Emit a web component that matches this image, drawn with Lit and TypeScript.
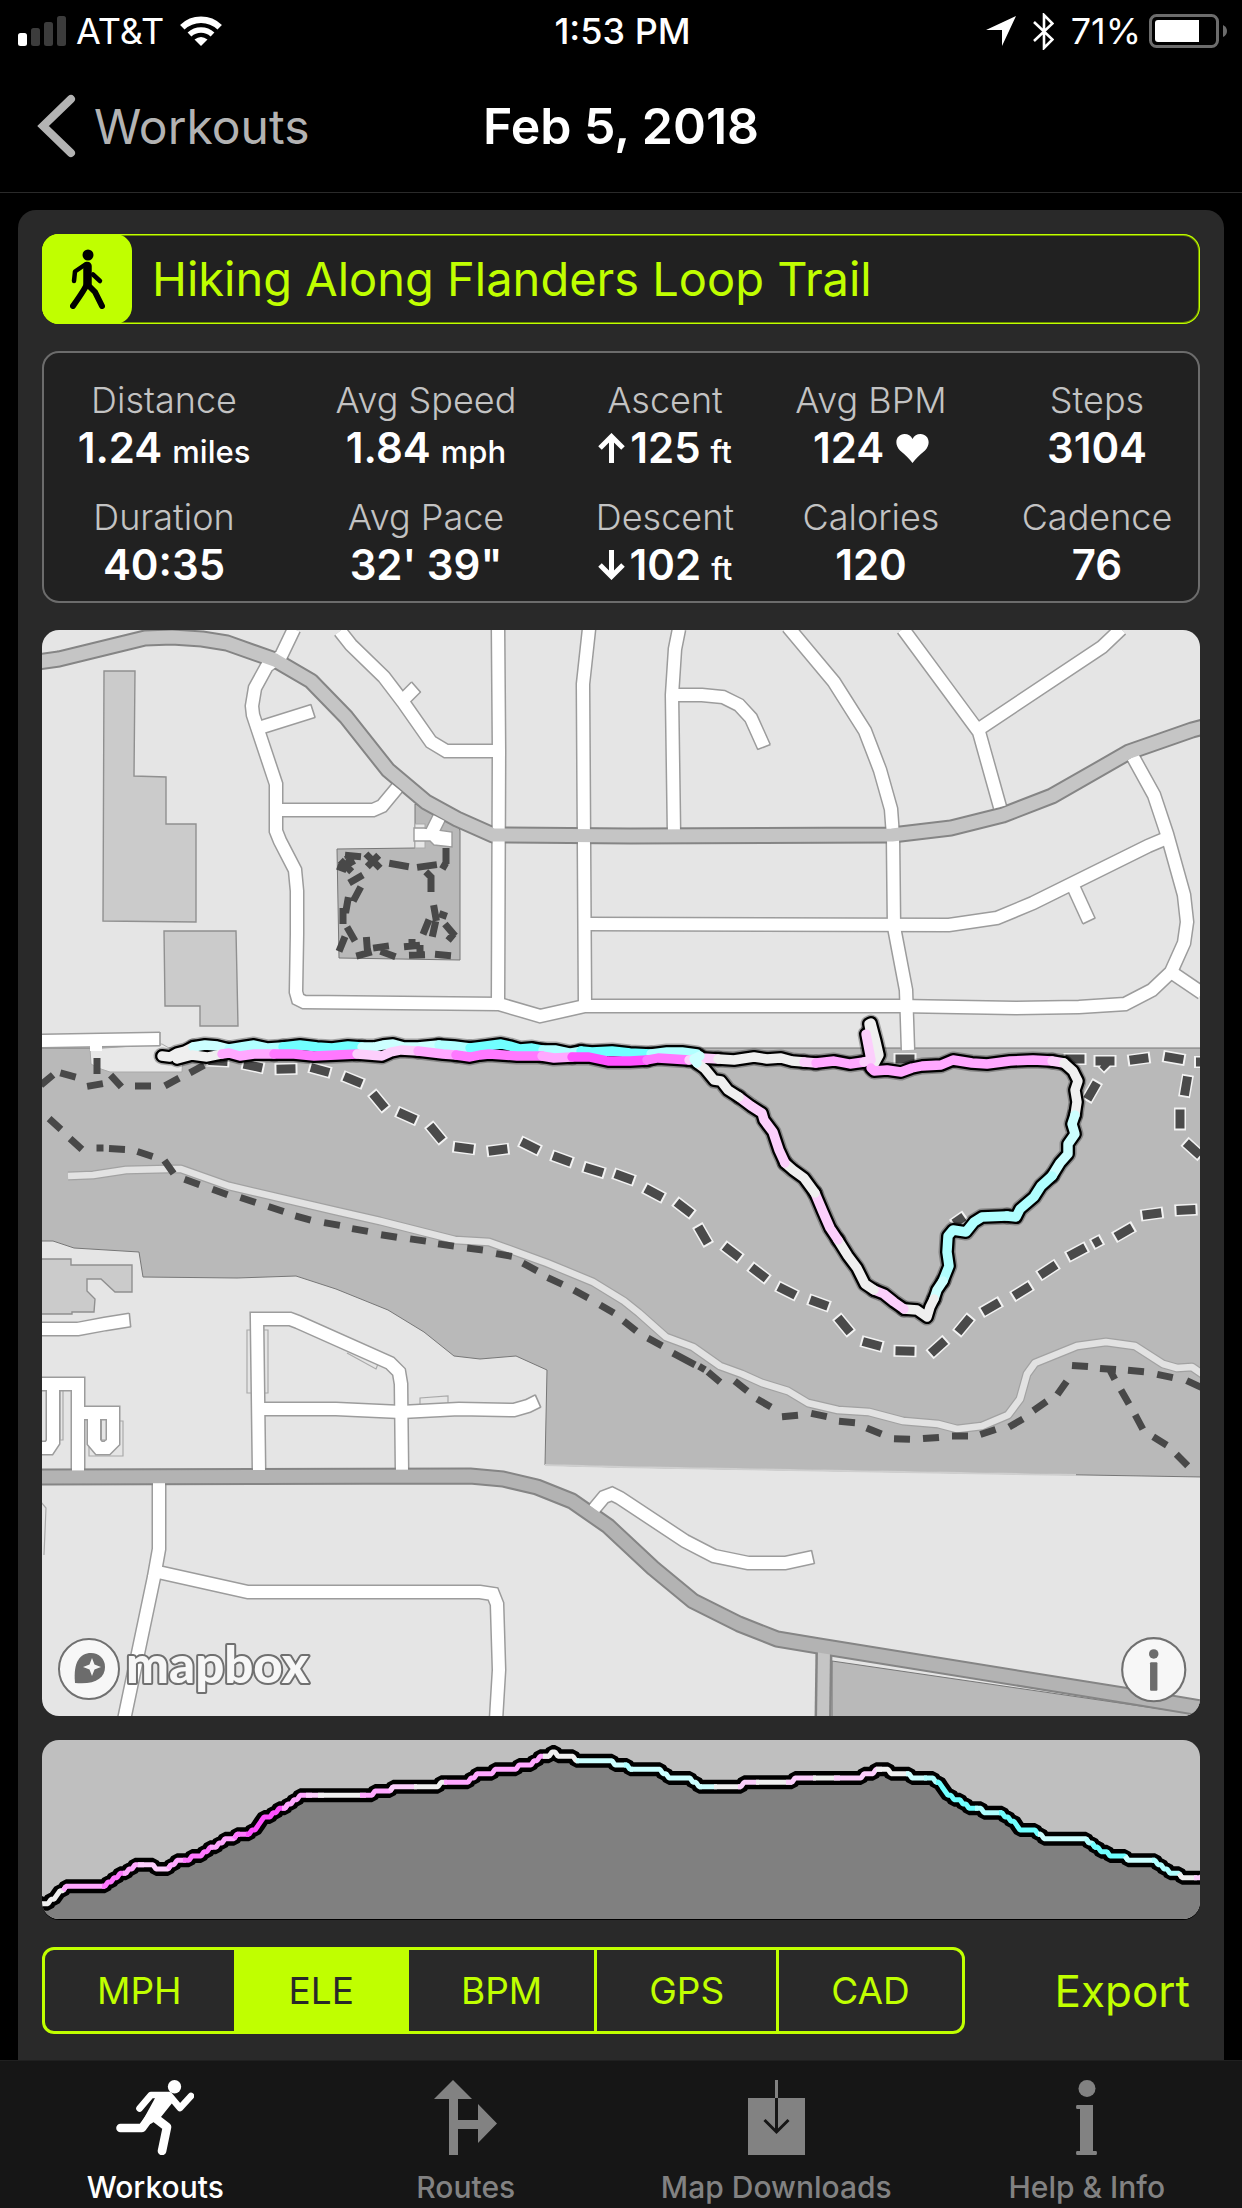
import { LitElement, html, svg, css } from "lit";
import { customElement, state } from "lit/decorators.js";
import { classMap } from "lit/directives/class-map.js";

type Point = [number, number];
/** Centre x, centre y, angle in degrees and an optional length. */
type Dash = [number, number, number, number?];

const TINTS: Record<string, string> = {
  w: "#efefef",
  p: "#fccffc",
  q: "#ffa8ff",
  m: "#ff78ff",
  M: "#ff50ff",
  c: "#ccffff",
  d: "#b0ffff",
  C: "#70ffff",
};

const MINOR_ROADS: string[] = [
  "252,-1 239,26 225,36 213,58 210,76 211,85 215,97 234,154 234,201 238,211 253,240 255,261 255,304 254,362 256,369 262,372 457,374 498,386 543,376 857,376 974,378 1037,377 1083,374 1110,360 1129,342 1142,313 1145,292 1142,265 1125,204 1112,165 1091,127",
  "220,97 271,81",
  "239,180 331,180 340,176 355,158",
  "298,1 309,15 342,47 361,72 389,112 404,121 457,121",
  "361,70 374,57",
  "456,-5 457,121 456,374",
  "547,-1 541,54 543,376",
  "543,294 907,295 955,288 991,273 1106,216 1125,208",
  "637,-1 633,19 630,65 632,204",
  "631,65 660,65 681,67 697,75 709,88 722,117",
  "746,-3 792,52 823,101 838,140 849,179 851,206 852,297 864,360 866,420",
  "861,-1 937,102 958,177",
  "937,99 1060,17 1079,-1",
  "1031,256 1047,291",
  "1129,342 1160,363",
  "397,188 388,206",
  "-5,411 118,409",
  "117,850 117,919 112,947 82,1090",
  "116,942 206,962 438,962 451,964 455,974 457,1040 454,1090",
  "217,842 215,689 248,689 256,692 348,733 357,742 359,754 360,842",
  "216,779 294,779 359,782 417,779 472,780 486,776 496,771",
  "-5,699 36,699 63,694 88,690",
  "-5,754 36,754 36,842",
  "11,758 11,812 7,818 -5,818",
  "36,783 71,783 71,812 65,818 57,818 52,812 52,783",
  "552,879 562,867 570,864 578,868 643,911 672,926 706,933 743,933 771,927",
];

const ROAD_ENDS: Dash[] = [
  [271, 81, 72], [374, 57, 49], [722, 117, 158], [1047, 291, 155],
  [118, 409, 90], [496, 771, 66], [88, 690, 84], [771, 927, 78],
];

const NORTH_ROAD =
  "-5,32 17,29 103,8 130,7 160,9 185,13 233,30 269,51 304,87 346,140 384,172 415,189 451,205 588,206 850,205 909,198 961,185 1010,166 1087,122 1150,100 1165,96";
const SOUTH_ROAD =
  "-5,847 428,846 461,849 495,857 530,871 566,896 611,938 651,971 697,994 735,1009 777,1016 1087,1066 1165,1079";
const CREEK =
  "26,546 51,545 84,540 126,539 139,539 187,556 294,581 338,591 413,610 447,612 505,633 551,652 582,671 597,683 624,707 651,717 678,736 700,744 720,753 746,761 766,773 796,780 827,782 861,791 896,794 915,799 940,796 966,785 978,769 985,744 993,733 1035,716 1064,712 1093,716 1121,734 1135,738 1150,737 1163,746";

const TRAIL_DASHES: Dash[] = [
  [176, 431, 3], [211, 436, 12], [244, 439, -1], [278, 440, 15], [311, 450, 22],
  [337, 471, 50], [365, 486, 24], [394, 503, 50], [422, 518, 7], [456, 520, -7],
  [488, 516, 26], [520, 529, 20], [552, 540, 17], [582, 547, 20], [612, 563, 28],
  [642, 578, 38], [661, 605, 60], [690, 622, 38], [717, 643, 38], [745, 661, 27],
  [777, 673, 20], [802, 695, 50], [830, 714, 15], [863, 721, 1], [896, 717, -42],
  [922, 695, -50], [949, 677, -30], [980, 661, -32], [1006, 640, -33],
  [1035, 622, -28], [1055, 612, -28, 8], [1082, 602, -30], [1110, 584, -8],
  [1144, 580, -3], [863, 429, 0], [1033, 429, 0], [1063, 431, 0], [1063, 436, 45, 6],
  [1097, 429, -8], [1132, 428, 10], [1160, 432, 0, 12], [1050, 461, -60],
  [1144, 456, -80], [1138, 489, 90], [1151, 519, 42], [917, 590, -35, 12],
];

const PATH_DASHES: Dash[] = [
  [5, 450, -40], [26, 445, 15], [53, 455, -10], [55, 436, 90], [74, 451, 48],
  [101, 456, 0], [130, 452, -28], [155, 439, -28], [13, 494, 42], [34, 514, 42],
  [58, 518, 0, 7], [75, 519, 3], [103, 524, 18], [127, 537, 55], [150, 552, 20],
  [178, 562, 20], [206, 570, 18], [234, 579, 18], [261, 588, 15], [290, 594, 10],
  [318, 600, 10], [347, 606, 9], [376, 610, 8], [404, 615, 8], [433, 619, 7],
  [462, 625, 10], [488, 637, 28], [513, 651, 25], [539, 664, 28], [565, 679, 30],
  [588, 696, 38], [613, 712, 28], [642, 729, 28, 25], [660, 738, 30, 7],
  [672, 747, 40], [699, 756, 38], [722, 773, 30], [748, 786, -5], [777, 785, 12],
  [805, 792, 5], [832, 801, 22], [860, 809, 2], [889, 808, -4], [918, 806, 0],
  [946, 802, -18], [974, 793, -30], [998, 776, -35], [1020, 758, -55],
  [1038, 736, 4], [1066, 739, 4], [1094, 741, 5], [1123, 746, 12], [1152, 754, 25],
  [1070, 744, 62, 12], [1083, 767, 60], [1097, 792, 62], [1118, 811, 32], [1140, 830, 45],
  [311, 226, 5], [308, 230, 60, 12], [304, 236, 45], [300, 238, 20, 10], [306, 233, -60],
  [331, 231, 45, 20], [331, 231, -45], [357, 235, 10, 20], [385, 236, -8, 20],
  [404, 226, 90], [402, 236, -60, 7], [389, 254, 90], [387, 245, 45, 9],
  [314, 249, -30], [315, 264, -62], [305, 275, -80], [301, 286, 90],
  [309, 304, 60], [300, 314, -68], [325, 315, 86], [322, 324, -15], [339, 317, -8],
  [346, 324, 20], [370, 316, -5], [378, 320, 90, 10], [375, 325, -2], [401, 325, 5],
  [393, 283, 80], [384, 297, -68], [392, 299, -78], [401, 285, 20, 8],
  [408, 300, 50], [409, 307, -50, 9], [370, 313, 90, 8],
];

/** Each leg is a tint key followed by the points that it runs through. */
const ROUTE: [string, string][] = [
  ["w", "120,426 128,427 135,423 143,421 151,417"],
  ["c", "151,417 163,415 175,416 187,419"],
  ["d", "187,419 199,417 212,415 226,418 241,417"],
  ["C", "241,417 258,415 275,417 290,418 306,416 320,417"],
  ["c", "320,417 332,417 341,415 351,414 362,417 376,417 397,415"],
  ["d", "397,415 412,416 428,418"],
  ["C", "428,418 444,416 459,414 468,416 478,419 490,418 501,420"],
  ["d", "501,420 514,420 528,423 539,421"],
  ["C", "539,421 550,422 570,421 588,423 609,424"],
  ["d", "609,424 625,422 640,422 655,424"],
  ["w", "135,429 150,425 165,427 180,424"],
  ["q", "180,424 187,423 198,426 212,424 232,424"],
  ["m", "232,424 252,424 272,426 294,425 315,424"],
  ["p", "315,424 340,426 349,422 359,420 376,421"],
  ["q", "376,421 401,424 414,425"],
  ["m", "414,425 428,427 438,425 447,424 475,426 500,426"],
  ["q", "500,426 512,428 530,427"],
  ["M", "530,427 547,427 566,431 588,431 605,430"],
  ["m", "605,430 616,428 632,429 647,430"],
  ["p", "647,430 660,428 676,429"],
  ["w", "676,429 692,430 712,427 725,429 739,428 750,431 762,432"],
  ["p", "762,432 774,433"],
  ["q", "774,433 792,431 808,434 822,432"],
  ["w", "831,430 832,420 827,394 829,393 834,412 837,425 830,438"],
  ["p", "822,432 829,430 824,404"],
  ["q", "829,438 832,441 845,440 859,442 870,438 880,436 899,435 911,430 930,433 945,434 968,431 991,430 1010,431"],
  ["p", "1010,431 1022,433"],
  ["w", "1022,433 1031,441 1036,451 1033,460 1035,472 1033,485"],
  ["c", "1033,485 1030,494 1033,504 1026,514 1026,524 1018,533 1010,546"],
  ["d", "1010,546 999,556 992,567 978,579 974,587 965,586"],
  ["d", "965,586 940,587 932,592 924,602 911,600 906,606 905,622 907,636 901,651"],
  ["c", "901,651 895,660 892,669"],
  ["w", "892,669 888,677 885,687 875,680 862,679"],
  ["p", "862,679 852,672 842,664 832,660"],
  ["w", "832,660 823,654 815,638 806,626 796,610"],
  ["p", "796,610 788,598 781,582 773,563"],
  ["w", "773,563 762,548 751,540 743,533"],
  ["p", "743,533 737,520 731,502 722,490 720,483 709,476 697,467"],
  ["w", "697,467 686,460 679,451 672,450 663,439 655,433"],
  ["c", "655,433 652,429 658,426"],
];

const ELEVATION: Point[] = [
  [0, 162], [7, 162], [27, 145], [62, 145], [97, 123], [109, 123], [114, 128],
  [126, 128], [138, 119], [147, 119], [152, 115], [159, 115], [186, 98], [192, 98],
  [197, 93], [209, 93], [219, 81], [258, 57], [261, 55], [330, 55], [335, 50], [348, 50],
  [352, 46], [397, 46], [401, 42], [426, 42], [435, 33], [449, 33], [453, 29],
  [474, 29], [480, 25], [489, 25], [501, 16], [508, 16], [512, 12], [516, 16],
  [532, 16], [536, 21], [570, 21], [574, 25], [584, 25], [588, 29], [618, 29],
  [627, 38], [646, 38], [658, 46], [700, 46], [705, 42], [749, 42], [756, 38],
  [817, 38], [823, 33], [832, 33], [836, 29], [845, 29], [848, 33], [865, 33],
  [870, 38], [888, 38], [896, 42], [902, 51], [920, 63], [928, 68], [937, 68],
  [941, 72], [959, 72], [979, 89], [991, 89], [1001, 98], [1043, 98], [1052, 106],
  [1070, 115], [1079, 115], [1086, 119], [1110, 119], [1127, 132], [1131, 132],
  [1138, 136], [1158, 136],
];

/** Tint key and the x at which it stops. */
const ELEVATION_TINTS: [string, number][] = [
  ["w", 24], ["q", 62], ["m", 84], ["q", 100], ["p", 128], ["q", 144], ["m", 170],
  ["q", 196], ["m", 207], ["M", 244], ["q", 268], ["p", 280], ["w", 322], ["q", 350],
  ["p", 375], ["w", 404], ["q", 505], ["w", 536], ["c", 584], ["d", 590], ["c", 660],
  ["c", 674], ["w", 699], ["p", 716], ["w", 748], ["p", 774], ["w", 796], ["p", 838],
  ["w", 866], ["c", 884], ["d", 896], ["C", 935], ["d", 960], ["C", 998], ["c", 1046],
  ["d", 1054], ["C", 1086], ["c", 1112], ["d", 1140], ["w", 1155], ["p", 1158],
];

const STEP = 13 / 3;

/** The elevation profile sampled every three units and snapped to whole steps. */
function steppedProfile(): Point[] {
  const out: Point[] = [];
  let i = 0;
  for (let x = 0; x <= 1158; x += 3) {
    while (i < ELEVATION.length - 2 && ELEVATION[i + 1][0] < x) i++;
    const [x0, y0] = ELEVATION[i];
    const [x1, y1] = ELEVATION[i + 1];
    const y = y0 + ((y1 - y0) * (x - x0)) / (x1 - x0);
    out.push([x, 12 + Math.round((y - 12) / STEP) * STEP]);
  }
  out.push([1160, 136]);
  return out;
}

const join = (points: Point[]) => points.map(([x, y]) => `${x},${y.toFixed(1)}`).join(" ");

function dashPath(dashes: Dash[], length: number): string {
  return dashes
    .map(([x, y, angle, own]) => {
      const half = (own ?? length) / 2;
      const dx = half * Math.cos((angle * Math.PI) / 180);
      const dy = half * Math.sin((angle * Math.PI) / 180);
      return `M${(x - dx).toFixed(1)} ${(y - dy).toFixed(1)}L${(x + dx).toFixed(1)} ${(y + dy).toFixed(1)}`;
    })
    .join("");
}

@customElement("trail-map")
export class TrailMap extends LitElement {
  static styles = css`
    :host { display: block; position: relative; border-radius: 17px; overflow: hidden; background: #e5e5e5; }
    .canvas { display: block; width: 100%; height: auto; }
    .line { fill: none; stroke-linejoin: round; }
    .minor-case { stroke: #9c9c9c; stroke-width: 15; stroke-linejoin: miter; }
    .minor { stroke: #fff; stroke-width: 12; stroke-linejoin: miter; }
    .major-case { stroke: #858585; stroke-width: 17; }
    .north { stroke: #c5c5c5; stroke-width: 13; }
    .south { stroke: #b3b3b3; stroke-width: 13; }
    .side { stroke: #c5c5c5; stroke-width: 12; }
    .park { fill: #b9b9b9; stroke: #777; stroke-width: 1; }
    .building { fill: #cbcbcb; stroke: #909090; stroke-width: 1.4; }
    .lot { fill: #e8e8e8; stroke: #aaa; stroke-width: 1; }
    .white { fill: #fff; stroke: #9c9c9c; stroke-width: 1.4; }
    .outline { fill: none; stroke: #aaa; stroke-width: 1.2; }
    .creek-case { stroke: #a2a2a2; stroke-width: 9; }
    .creek { stroke: #e2e2e2; stroke-width: 6.6; }
    .dash { stroke: #484848; stroke-width: 7; }
    .dash-wide { stroke: #4a4a4a; stroke-width: 9; }
    .dash-case { stroke: #f2f2f2; stroke-width: 12; }
    .end { stroke: #9c9c9c; stroke-width: 1.6; }
    .halo { stroke: rgba(0, 0, 0, 0.28); stroke-width: 17; stroke-linecap: round; }
    .route-case { stroke: #000; stroke-width: 14; stroke-linecap: round; }
    .route { stroke-width: 9.4; stroke-linecap: round; }
    .badge { fill: #f7f7f7; stroke: #707070; stroke-width: 2; }
    .ink { fill: #6c6c6c; }
    .word { font: 900 51px Lato, sans-serif; fill: #f7f7f7; stroke: #707070; stroke-width: 4; paint-order: stroke; stroke-linejoin: round; }
    .info { position: absolute; right: 1%; bottom: 1%; width: 6%; padding: 0; border: 0; background: none; }
    .info-icon { display: block; width: 100%; height: auto; }
  `;

  render() {
    return html`
      <svg class="canvas" viewBox="0 0 1158 1086" role="img" aria-label="Map of the hike">
        <polygon class="park" points="-2,418 1160,418 1160,847 578,837 503,835 505,740 474,726 438,729 412,726 382,702 346,680 294,659 254,646 195,648 101,647 97,622 32,618 11,611 -2,611"></polygon>
        <path d="M503 835L578 837L1034 845" fill="none" stroke="#cfcfcf" stroke-width="2"></path>
        <polygon class="park" points="295,219 373,218 373,174 415,190 418,201 418,330 297,328"></polygon>
        <polygon class="park" points="790,1031 961,1056 1160,1085 1160,1090 790,1090"></polygon>
        <polygon class="lot" points="48,419 49,434 56,438 68,442 140,442 141,426 120,414"></polygon>
        <polygon class="building" points="62,41 93,41 92,146 124,147 124,194 154,194 154,292 61,291"></polygon>
        <polygon class="building" points="122,301 194,301 196,396 158,396 158,376 123,376"></polygon>
        <polygon class="building" points="-2,629 29,629 29,635 90,635 90,662 73,662 59,649 45,649 45,661 53,669 52,682 30,682 30,684 -2,684"></polygon>
        <path class="outline" d="M205 700H226V763H205ZM305 723L334 739L336 734M378 776V768L406 766V776M18 761V810H21V761M47 817V826H81V791H77M-1 872L4 878L2 925"></path>
        <rect class="lot" x="373" y="194" width="10" height="24"></rect>
        <polyline class="line creek-case" points=${CREEK}></polyline>
        <polyline class="line creek" points=${CREEK}></polyline>
        <path class="line dash" d=${dashPath(PATH_DASHES, 16)}></path>
        <path class="line dash-case" d=${dashPath(TRAIL_DASHES.map(([x, y, a, l]) => [x, y, a, (l ?? 19) + 4] as Dash), 22)}></path>
        <path class="line dash-wide" d=${dashPath(TRAIL_DASHES, 19)}></path>
        ${MINOR_ROADS.map((points) => svg`<polyline class="line minor-case" points=${points}></polyline>`)}
        <polygon class="white" points="372,198 382,198 410,202 410,217 392,215 388,211 372,211"></polygon>
        <polyline class="line major-case" points="782,1018 781,1092"></polyline>
        <polyline class="line major-case" points=${NORTH_ROAD}></polyline>
        <polyline class="line major-case" points=${SOUTH_ROAD}></polyline>
        ${MINOR_ROADS.map((points) => svg`<polyline class="line minor" points=${points}></polyline>`)}
        <polyline class="line minor" points="54,412 54,421"></polyline>
        <rect x="59.500" y="790" width="4.500" height="20" fill="#e5e5e5" stroke="#9c9c9c"></rect>
        <polyline class="line side" points="782,1018 781,1092"></polyline>
        <path class="line end" d=${dashPath(ROAD_ENDS, 14)}></path>
        <polyline class="line north" points=${NORTH_ROAD}></polyline>
        <polyline class="line south" points=${SOUTH_ROAD}></polyline>
        ${ROUTE.map(([, points]) => svg`<polyline class="line halo" points=${points}></polyline>`)}
        ${ROUTE.map(([, points]) => svg`<polyline class="line route-case" points=${points}></polyline>`)}
        ${ROUTE.map(([tint, points]) => svg`<polyline class="line route" stroke=${TINTS[tint]} points=${points}></polyline>`)}
        <circle class="badge" cx="47" cy="1039" r="30"></circle>
        <path class="ink" d="M33 1053C31 1032 38 1023 49 1023C57 1023 63 1029 63 1037C63 1048 53 1055 33 1053Z"></path>
        <path fill="#f7f7f7" d="M50 1028L52.500 1034.500L59 1037L52.500 1039.500L50 1046L47.500 1039.500L41 1037L47.500 1034.500Z"></path>
        <text class="word" x="84" y="1053">mapbox</text>
      </svg>
      <button class="info" aria-label="Map attribution">
        <svg class="info-icon" viewBox="0 0 66 66">
          <circle class="badge" cx="33" cy="32" r="30"></circle>
          <circle class="ink" cx="33" cy="17" r="4.500"></circle>
          <rect class="ink" x="29.500" y="25" width="7" height="27" rx="1"></rect>
        </svg>
      </button>
    `;
  }
}

@customElement("elevation-chart")
export class ElevationChart extends LitElement {
  static styles = css`
    :host { display: block; border-radius: 17px; overflow: hidden; background: #bfbfbf; box-shadow: 0 1px 0 #000; }
    .chart { display: block; width: 100%; height: auto; }
    .ground { fill: #808080; }
    .edge { fill: none; stroke: #000; stroke-width: 14; stroke-linejoin: bevel; }
    .tint { fill: none; stroke-width: 5; stroke-linejoin: bevel; }
  `;

  render() {
    const profile = steppedProfile();
    let from = 0;
    const legs = ELEVATION_TINTS.map(([tint, to]) => {
      const points = profile.filter(([x]) => x >= from - 4 && x <= to + 2);
      from = to;
      return svg`<polyline class="tint" stroke=${TINTS[tint]} points=${join(points)}></polyline>`;
    });
    return html`
      <svg class="chart" viewBox="0 0 1158 179" role="img" aria-label="Elevation profile">
        <polygon class="ground" points="${join(profile)} 1160,180 0,180"></polygon>
        <polyline class="edge" points="-4,162 ${join(profile)}"></polyline>
        ${legs}
      </svg>
    `;
  }
}

const METRICS = ["MPH", "ELE", "BPM", "GPS", "CAD"];

@customElement("app-root")
export class AppRoot extends LitElement {
  @state() private metric = "ELE";
  @state() private tab = "Workouts";

  static styles = css`
    :host {
      --lime: #c0ff00;
      display: flex;
      flex-direction: column;
      min-height: 100vh;
      background: #000;
      color: #fff;
      font-family: Inter, "Liberation Sans", sans-serif;
    }
    * { box-sizing: border-box; }
    button, a { font: inherit; color: inherit; text-decoration: none; }
    button { padding: 0; border: 0; background: none; }
    svg { display: block; flex: none; }
    .status { display: grid; grid-template-columns: 1fr auto 1fr; align-items: center; height: 62px; padding: 0 15px 0 18px; font-size: 36px; }
    .group { display: flex; align-items: center; }
    .carrier { gap: 10px; }
    .wifi { margin-left: 6px; }
    .clock { font-weight: 500; }
    .power { justify-content: flex-end; gap: 8px; }
    .bluetooth { margin: 0 9px; }
    .nav { display: grid; grid-template-columns: 1fr auto 1fr; align-items: center; height: 131px; padding: 0 36px 2px; border-bottom: 1px solid #2a2a2a; }
    .back { display: flex; align-items: center; gap: 18px; justify-self: start; color: #b3b3b3; font-size: 48px; font-weight: 400; }
    .title { margin: 0; font-size: 50px; font-weight: 600; }
    .card { display: flex; flex: 1; flex-direction: column; gap: 24px; margin: 17px 18px 0; padding: 24px 24px 26px; border-radius: 18px 18px 0 0; background: #292929; }
    .heading { display: flex; align-items: center; gap: 20px; height: 90px; border-radius: 17px; background: #212121; box-shadow: inset 0 0 0 1px var(--lime), inset 0 0 0 2px #709000; color: var(--lime); }
    .walker { display: grid; place-items: center; width: 90px; height: 90px; border-radius: 17px; background: var(--lime); color: #000; }
    .name { margin: 0; padding-bottom: 2px; font-size: 47px; font-weight: 400; white-space: nowrap; }
    .stats { display: grid; grid-template-columns: 208fr 316fr 162fr 250fr 202fr; row-gap: 23px; margin: 3px 0; padding: 24px 0 13px 16px; border: 2px solid #6c6c6c; border-radius: 17px; background: #212121; text-align: center; white-space: nowrap; }
    .stat { display: flex; flex-direction: column; align-items: center; }
    .label { font-size: 36px; line-height: 47px; font-weight: 300; color: #c3c3c3; }
    .value { display: flex; align-items: baseline; margin: 0; height: 47px; font-size: 42px; line-height: 47px; font-weight: 600; }
    .unit { margin-left: 10px; font-size: 31px; font-weight: 500; }
    .arrow { margin-right: 5px; }
    .heart { margin-left: 12px; }
    .controls { display: flex; align-items: center; justify-content: space-between; margin-top: 4px; padding-right: 10px; color: var(--lime); }
    .segments { display: flex; height: 87px; border: 3px solid var(--lime); border-radius: 12px; overflow: hidden; font-size: 37px; }
    .segment { padding: 0 52px; border-right: 3px solid var(--lime); }
    .segment:last-child { border-right: 0; }
    .chosen { background: var(--lime); color: #292929; }
    .export { font-size: 44px; }
    .tabs { display: grid; grid-template-columns: repeat(4, 1fr); height: 148px; background: #161616; border-top: 1px solid #202020; color: #828282; font-size: 30px; }
    .tab { display: flex; flex-direction: column; align-items: center; gap: 14px; padding-top: 19px; font-weight: 500; }
    .tab-label { line-height: 36px; white-space: nowrap; }
    .current { color: #fff; }
  `;

  private stat(label: string, value: unknown) {
    return html`<div class="stat"><span class="label">${label}</span><p class="value">${value}</p></div>`;
  }

  private arrow(up: boolean) {
    return html`<svg class="arrow" width="27" height="30" viewBox="0 0 27 30" fill="none" stroke="currentColor" stroke-width="5">
      ${up ? svg`<path d="M13.500 30V4M2 15L13.500 3.500L25 15"></path>` : svg`<path d="M13.500 0V26M2 15L13.500 26.500L25 15"></path>`}
    </svg>`;
  }

  private tabLink(label: string, icon: unknown) {
    return html`<a class=${classMap({ tab: true, current: this.tab === label })} href="#" @click=${(e: Event) => { e.preventDefault(); this.tab = label; }}>
      ${icon}<span class="tab-label">${label}</span>
    </a>`;
  }

  render() {
    const unit = (text: string) => html`<span class="unit">${text}</span>`;
    return html`
      <div class="status">
        <div class="group carrier">
          <svg width="48" height="30" viewBox="0 0 48 30" fill="#3c3c3c">
            <rect x="0" y="17" width="9" height="13" rx="2.500" fill="#fff"></rect>
            <rect x="13" y="12" width="9" height="18" rx="2.500"></rect>
            <rect x="26" y="6" width="9" height="24" rx="2.500"></rect>
            <rect x="39" y="0" width="9" height="30" rx="2.500"></rect>
          </svg>
          <span>AT&amp;T</span>
          <svg class="wifi" width="42" height="30" viewBox="0 0 42 30" fill="none" stroke="#fff">
            <path d="M2.300 11.200A27 27 0 0 1 39.700 11.200" stroke-width="6.400"></path>
            <path d="M9.500 18.500A17 17 0 0 1 32.500 18.500" stroke-width="5.600"></path>
            <path d="M21 30L14.500 23.500Q21 18.500 27.500 23.500Z" fill="#fff" stroke="none"></path>
          </svg>
        </div>
        <span class="clock">1:53 PM</span>
        <div class="group power">
          <svg width="30" height="30" viewBox="0 0 30 30" fill="#fff"><path d="M30 0L16 30V14H0Z"></path></svg>
          <svg class="bluetooth" width="21" height="37" viewBox="0 0 21 37" fill="none" stroke="#fff" stroke-width="2.600"><path d="M1 9L19.500 26.500L11 35V2L19.500 10.500L1 28"></path></svg>
          <span>71%</span>
          <svg width="78" height="34" viewBox="0 0 78 34">
            <rect x="1.500" y="1.500" width="67" height="31" rx="6" fill="none" stroke="#6c6c6c" stroke-width="3"></rect>
            <path d="M9 6H50V28H9Q6 28 6 25V9Q6 6 9 6Z" fill="#fff"></path>
            <path d="M74 11Q78 13 78 17T74 23Z" fill="#6c6c6c"></path>
          </svg>
        </div>
      </div>
      <nav class="nav">
        <a class="back" href="#">
          <svg width="40" height="64" viewBox="0 0 40 64" fill="none" stroke="currentColor" stroke-width="8" stroke-linecap="round"><path d="M35 5L7 32L35 59"></path></svg>
          Workouts
        </a>
        <h1 class="title">Feb 5, 2018</h1>
      </nav>
      <main class="card">
        <div class="heading">
          <span class="walker">
            <svg width="35" height="60" viewBox="0 0 35 60" fill="none" stroke="currentColor" stroke-linecap="round" stroke-linejoin="round">
              <circle cx="18" cy="6" r="5.500" fill="currentColor" stroke="none"></circle>
              <path d="M16 15L5 22.500L4 32M23 25.500L30 32" stroke-width="4.500"></path>
              <path d="M17.500 17V35" stroke-width="8.500"></path>
              <path d="M17 35Q15 40 3 57M17 35L25 43L32 57" stroke-width="6"></path>
            </svg>
          </span>
          <h2 class="name">Hiking Along Flanders Loop Trail</h2>
        </div>
        <section class="stats">
          ${this.stat("Distance", html`1.24${unit("miles")}`)}
          ${this.stat("Avg Speed", html`1.84${unit("mph")}`)}
          ${this.stat("Ascent", html`${this.arrow(true)}125${unit("ft")}`)}
          ${this.stat("Avg BPM", html`124<svg class="heart" width="33" height="29" viewBox="0 0 33 29" fill="currentColor"><path d="M16.500 29Q12 23 4 16.500C-3 9 1 0 8.500 0Q14 0 16.500 5Q19 0 24.500 0C32 0 36 9 29 16.500Q21 23 16.500 29Z"></path></svg>`)}
          ${this.stat("Steps", "3104")}
          ${this.stat("Duration", "40:35")}
          ${this.stat("Avg Pace", `32' 39"`)}
          ${this.stat("Descent", html`${this.arrow(false)}102${unit("ft")}`)}
          ${this.stat("Calories", "120")}
          ${this.stat("Cadence", "76")}
        </section>
        <trail-map></trail-map>
        <elevation-chart></elevation-chart>
        <div class="controls">
          <div class="segments" role="group" aria-label="Chart metric">
            ${METRICS.map((m) => html`<button class=${classMap({ segment: true, chosen: m === this.metric })} aria-pressed=${m === this.metric} @click=${() => (this.metric = m)}>${m}</button>`)}
          </div>
          <button class="export">Export</button>
        </div>
      </main>
      <nav class="tabs">
        ${this.tabLink("Workouts", html`<svg width="78" height="75" viewBox="0 0 78 75" fill="none" stroke="currentColor" stroke-linecap="round" stroke-linejoin="round">
          <circle cx="58.500" cy="6.700" r="6.700" fill="currentColor" stroke="none"></circle>
          <path d="M23.500 28.500L35 15H53L64 28L75 16" stroke-width="6.600"></path>
          <path d="M43 14H53L55 22L43 37L35 42L26 45Z" fill="currentColor" stroke-width="3"></path>
          <path d="M34 37L26 48H4.500M38 37L51 47L46 71" stroke-width="8.600"></path>
        </svg>`)}
        ${this.tabLink("Routes", html`<svg width="63" height="75" viewBox="0 0 63 75" fill="currentColor"><path d="M19 0L38 19H24V40H44V24L63 43.500L44 63V49H24V75H15V19H0Z"></path></svg>`)}
        ${this.tabLink("Map Downloads", html`<svg width="57" height="75" viewBox="0 0 57 75" fill="none" stroke-width="3">
          <path d="M0 18H57V75H0Z" fill="currentColor"></path>
          <path d="M28.500 0V18" stroke="currentColor"></path>
          <path d="M28.500 18V52M16.500 40L28.500 52L40.500 40" stroke="#161616"></path>
        </svg>`)}
        ${this.tabLink("Help & Info", html`<svg width="21" height="75" viewBox="0 0 21 75" fill="currentColor">
          <circle cx="11" cy="8.500" r="8.500"></circle>
          <path d="M1 25H17V71H20Q21 71 21 73T20 75H1Q0 75 0 73T1 71H4V29H1Q0 29 0 27T1 25Z"></path>
        </svg>`)}
      </nav>
    `;
  }
}
